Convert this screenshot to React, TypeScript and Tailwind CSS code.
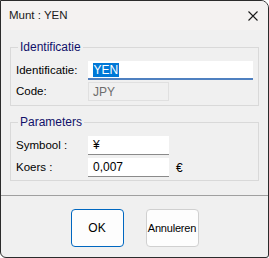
export default function App() {
	return (
		<div className="w-[269px] h-[258px] flex flex-col bg-[#f0f0f0] border border-[#2b2b2b] rounded-tr-[8px] rounded-bl-[6px] rounded-br-[3px] overflow-hidden font-['Liberation_Sans',Arial,sans-serif] text-[11.5px] text-[#000]">
			{/* title bar */}
			<div className="h-[29px] shrink-0 flex items-center justify-between pl-[8px] pr-[10px] bg-[#f4f2f1] text-[#1a1a1a]">
				<span className="text-[11.5px]">Munt : YEN</span>
				<svg width="10" height="10" viewBox="0 0 10 10" className="text-[#1a1a1a]">
					<path d="M0.5 0.5 L9.5 9.5 M9.5 0.5 L0.5 9.5" stroke="currentColor" strokeWidth="1.1" fill="none" />
				</svg>
			</div>

			<div className="flex-1 flex flex-col px-[9px]">
				<fieldset className="mt-[10px] border border-[#d9d9d9] px-[5px] pb-[4px]">
					<legend className="ml-[2px] px-[2px] text-[#10106a] text-[12px] leading-[15px]">Identificatie</legend>
					<div className="flex flex-col gap-[2px] pt-[6px]">
						<div className="flex items-center h-[19px]">
							<span className="w-[72px]">Identificatie:</span>
							<div className="w-[165px] h-[19px] bg-white border-b-2 border-[#4f80c0] flex items-center pl-[5px] text-[12px]">
								<span className="bg-[#0078d7] text-white leading-[14px] px-[0.5px]">YEN</span>
							</div>
						</div>
						<div className="flex items-center h-[19px]">
							<span className="w-[72px]">Code:</span>
							<div className="w-[81px] h-[19px] bg-[#f0f0f0] border border-[#e0e0e0] flex items-center pl-[4px] text-[12px] text-[#6d6d6d]">
								JPY
							</div>
						</div>
					</div>
				</fieldset>

				<fieldset className="mt-[9px] border border-[#d9d9d9] px-[5px] pb-[3px]">
					<legend className="ml-[2px] px-[2px] text-[#10106a] text-[12px] leading-[15px]">Parameters</legend>
					<div className="flex flex-col gap-[3px] pt-[6px]">
						<div className="flex items-center h-[19px]">
							<span className="w-[72px]">Symbool :</span>
							<div className="w-[81px] h-[19px] bg-white border-b border-[#8a8a8a] flex items-center pl-[5px] text-[12px]">¥</div>
						</div>
						<div className="flex items-center h-[19px]">
							<span className="w-[72px]">Koers :</span>
							<div className="w-[81px] h-[19px] bg-white border-b border-[#8a8a8a] flex items-center pl-[5px] text-[12px]">0,007</div>
							<span className="ml-[7px] text-[12px]">€</span>
						</div>
					</div>
				</fieldset>
			</div>

			<div className="h-[62px] shrink-0 border-t border-[#a0a0a0] flex justify-center items-start pt-[13px] gap-[22px]">
				<button className="w-[53px] h-[38px] rounded-[4px] border border-[#0067c0] bg-[#fdfdfd] text-[12px] text-black">OK</button>
				<button className="w-[53px] h-[38px] rounded-[4px] border border-[#d0d0d0] bg-[#fdfdfd] text-[11px] text-black tracking-[-0.2px]">Annuleren</button>
			</div>
		</div>
	);
}
